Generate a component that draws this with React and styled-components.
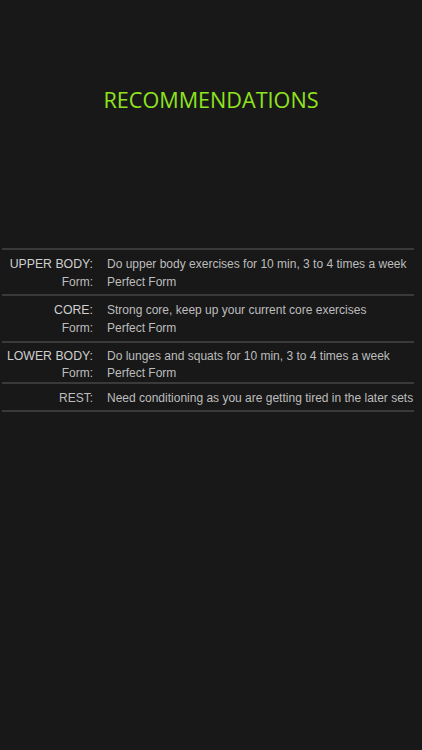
import React from "react";
import styled, { createGlobalStyle } from "styled-components";

const Global = createGlobalStyle`
  html, body {
    margin: 0;
    padding: 0;
    background: #181818;
  }
  body {
    font-family: "Liberation Sans", Arial, sans-serif;
  }
`;

const Screen = styled.div`
  width: 422px;
  height: 750px;
  background: #181818;
  display: flex;
  flex-direction: column;
  overflow: hidden;
`;

const Title = styled.h1`
  margin: 87px 0 0;
  height: 26px;
  text-align: center;
  font-family: "Open Sans", sans-serif;
  font-weight: 400;
  font-size: 21.6px;
  line-height: 26px;
  color: #8fe31e;
`;

const Table = styled.div`
  margin: 135px 8px 0 2px;
  display: flex;
  flex-direction: column;
  border-bottom: 2px solid #3a3a3a;
`;

const Section = styled.div`
  display: flex;
  flex-direction: column;
  gap: ${(p) => p.$gap}px;
  padding: ${(p) => p.$pad};
  border-top: 2px solid #3a3a3a;
`;

const Line = styled.div`
  display: grid;
  grid-template-columns: 91px 1fr;
  column-gap: 14px;
  align-items: baseline;
`;

const Label = styled.div`
  text-align: right;
  white-space: nowrap;
  color: ${(p) => (p.$head ? "#cfcfcf" : "#bdbdbd")};
  font-size: ${(p) => (p.$head ? "12.3px" : "12px")};
  line-height: 16px;
`;

const Value = styled.div`
  white-space: nowrap;
  color: #bdbdbd;
  font-size: 12px;
  line-height: 16px;
`;

const rows = [
  {
    head: "UPPER BODY:",
    text: "Do upper body exercises for 10 min, 3 to 4 times a week",
    form: "Perfect Form",
    pad: "6px 0 4px",
    gap: 2,
  },
  {
    head: "CORE:",
    text: "Strong core, keep up your current core exercises",
    form: "Perfect Form",
    pad: "6px 0 5px",
    gap: 2,
  },
  {
    head: "LOWER BODY:",
    text: "Do lunges and squats for 10 min, 3 to 4 times a week",
    form: "Perfect Form",
    pad: "5px 0 1px",
    gap: 1,
  },
  {
    head: "REST:",
    text: "Need conditioning as you are getting tired in the later sets",
    pad: "6px 0 4px",
    gap: 0,
  },
];

export default function App() {
  return (
    <Screen>
      <Global />
      <Title>RECOMMENDATIONS</Title>
      <Table>
        {rows.map((r) => (
          <Section key={r.head} $pad={r.pad} $gap={r.gap}>
            <Line>
              <Label $head={r.head !== "REST:"}>{r.head}</Label>
              <Value>{r.text}</Value>
            </Line>
            {r.form && (
              <Line>
                <Label>Form:</Label>
                <Value>{r.form}</Value>
              </Line>
            )}
          </Section>
        ))}
      </Table>
    </Screen>
  );
}
